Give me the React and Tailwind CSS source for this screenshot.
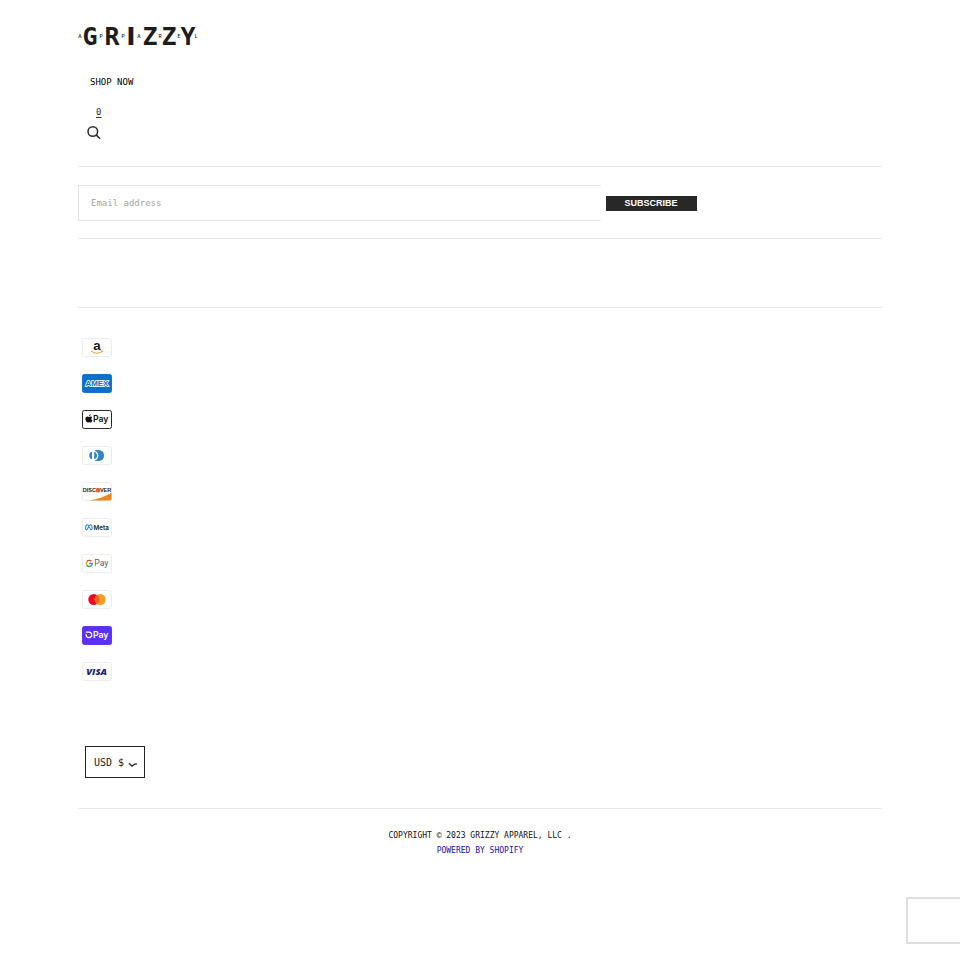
import React, { useState } from 'react';

const MONO = "font-['DejaVu_Sans_Mono',monospace]";

// Big letters of the wordmark, with the small "APPAREL" letters set between them.
// The I comes from a proportional face, the monospace one has slab serifs.
const BIG_LETTERS = [
  { char: 'G', x: 12, font: 'DejaVu Sans Mono, monospace' },
  { char: 'R', x: 34, font: 'DejaVu Sans Mono, monospace' },
  { char: 'I', x: 53, font: 'DejaVu Sans, sans-serif' },
  { char: 'Z', x: 72, font: 'DejaVu Sans Mono, monospace' },
  { char: 'Z', x: 91, font: 'DejaVu Sans Mono, monospace' },
  { char: 'Y', x: 110, font: 'DejaVu Sans Mono, monospace' },
];

const SMALL_LETTERS = [
  { char: 'A', x: 2 },
  { char: 'P', x: 23 },
  { char: 'P', x: 45 },
  { char: 'A', x: 61 },
  { char: 'R', x: 82 },
  { char: 'E', x: 101 },
  { char: 'L', x: 118 },
];

const Logo = () => (
  <svg viewBox="0 0 120 32" className="block h-8 w-[120px] overflow-visible" role="img" aria-label="Grizzy Apparel" fill="#1d1d1d" textAnchor="middle">
    {BIG_LETTERS.map((l) => (
      <text key={l.x} x={l.x} y="25" fontFamily={l.font} fontWeight="700" fontSize="25">{l.char}</text>
    ))}
    {SMALL_LETTERS.map((l) => (
      <text key={l.x} x={l.x} y="18" fontFamily="Roboto, sans-serif" fontWeight="500" fontSize="5">{l.char}</text>
    ))}
  </svg>
);

const Card = ({ title, fill = '#fff', stroke = '#ececec', children }) => (
  <svg viewBox="0 0 38 24" className="block h-[19px] w-[30px] overflow-visible" role="img" aria-label={title}>
    <rect x="0.6" y="0.6" width="36.8" height="22.8" rx="2.4" fill={fill} stroke={stroke} strokeWidth="1.2" />
    {children}
  </svg>
);

const PAYMENTS = [
  {
    name: 'Amazon',
    icon: (
      <Card title="Amazon">
        <text x="19" y="15" textAnchor="middle" fontFamily="Liberation Sans, sans-serif" fontWeight="700" fontSize="17" fill="#1a1a1a">a</text>
        <path d="M12 16.600c4 3 9.500 3 13.200.5" fill="none" stroke="#f0a62f" strokeWidth="1.400" strokeLinecap="round" />
        <path d="M23.800 16l2.300-.1-.6 2.200" fill="none" stroke="#f0a62f" strokeWidth="1" />
      </Card>
    ),
  },
  {
    name: 'American Express',
    icon: (
      <Card title="American Express" fill="#0b70ca" stroke="#0b70ca">
        <text x="19" y="15.700" textAnchor="middle" fontFamily="Liberation Sans, sans-serif" fontWeight="700" fontSize="10" fill="#0b70ca" stroke="#fff" strokeWidth="2" paintOrder="stroke">AMEX</text>
      </Card>
    ),
  },
  {
    name: 'Apple Pay',
    icon: (
      <Card title="Apple Pay" stroke="#1d1d1d">
        <path d="M9 8.700c.8 0 1.300-.5 2.100-.5.7 0 1.400.4 1.800 1-1.700 1-1.400 3.300.3 4-.5 1.300-1.300 2.600-2.300 2.600-.7 0-1-.4-1.800-.4s-1.200.4-1.800.4c-1.600 0-2.900-2.500-2.900-4.500 0-1.900 1.200-3 2.600-3 .8 0 1.400.4 2 .4zM8.900 8c-.1-1.300.9-2.400 2.100-2.500.2 1.300-.9 2.400-2.100 2.500z" fill="#111" />
        <text x="13.800" y="15.800" fontFamily="Inter, sans-serif" fontWeight="600" fontSize="11" fill="#111">Pay</text>
      </Card>
    ),
  },
  {
    name: 'Diners Club',
    icon: (
      <Card title="Diners Club">
        <path d="M16.500 5H21a7 7 0 0 1 0 14h-4.500z" fill="#3086c8" />
        <circle cx="14" cy="12" r="6.600" fill="#fff" />
        <path d="M12.700 7.200a5 5 0 0 0 0 9.600zM15.400 7.200a5 5 0 0 1 0 9.600z" fill="#3086c8" />
      </Card>
    ),
  },
  {
    name: 'Discover',
    icon: (
      <Card title="Discover">
        <path d="M37.400 13.500V21c0 1.400-1 2.400-2.400 2.400H9C20 21.500 30 18 37.400 13.500z" fill="#ef8423" />
        <text x="1" y="12.800" fontFamily="Liberation Sans, sans-serif" fontWeight="700" fontSize="7" fill="#222">DISC</text>
        <circle cx="20.300" cy="10.300" r="2.900" fill="#e5632a" />
        <text x="22.700" y="12.800" fontFamily="Liberation Sans, sans-serif" fontWeight="700" fontSize="7" fill="#222">VER</text>
      </Card>
    ),
  },
  {
    name: 'Meta Pay',
    icon: (
      <Card title="Meta Pay">
        <path d="M4.500 13.500c0-2.700 1.100-5 2.500-5 2 0 2.900 6.400 4.700 6.400.9 0 1.200-.8 1.200-1.800 0-2.500-1-4.600-2.400-4.600-2 0-2.900 6.400-4.800 6.400-.8 0-1.200-.6-1.200-1.400z" fill="none" stroke="#1683db" strokeWidth="1.300" />
        <text x="14.600" y="14.800" fontFamily="Inter, sans-serif" fontWeight="600" fontSize="8" fill="#222">Meta</text>
      </Card>
    ),
  },
  {
    name: 'Google Pay',
    icon: (
      <Card title="Google Pay">
        <g fill="none" strokeWidth="1.800">
          <path d="M12 9.200A3.800 3.800 0 0 0 5.900 10" stroke="#e6453a" />
          <path d="M5.900 10a3.900 3.900 0 0 0 0 4" stroke="#f4b81c" />
          <path d="M5.900 14a3.800 3.800 0 0 0 5.800.900" stroke="#35a352" />
          <path d="M11.700 14.900c.8-.7 1.200-1.600 1.200-2.800H9.200" stroke="#4482e8" />
        </g>
        <text x="15.500" y="15.700" fontFamily="Roboto, sans-serif" fontSize="11" fill="#5a5e62">Pay</text>
      </Card>
    ),
  },
  {
    name: 'Mastercard',
    icon: (
      <Card title="Mastercard">
        <circle cx="15" cy="12" r="7" fill="#e80b20" />
        <circle cx="23" cy="12" r="7" fill="#f49b20" />
        <path d="M19 6.250a7 7 0 0 1 0 11.500 7 7 0 0 1 0-11.500z" fill="#f8601f" />
      </Card>
    ),
  },
  {
    name: 'Shop Pay',
    icon: (
      <Card title="Shop Pay" fill="#5a31f4" stroke="#5a31f4">
        <path d="M4.800 7.600h4a3.600 3.600 0 1 1-3.500 2.700" fill="none" stroke="#fff" strokeWidth="1.600" />
        <text x="13.800" y="15.200" fontFamily="Inter, sans-serif" fontWeight="600" fontSize="11" fill="#fff">Pay</text>
      </Card>
    ),
  },
  {
    name: 'Visa',
    icon: (
      <Card title="Visa">
        <text x="18.500" y="16" textAnchor="middle" fontFamily="Open Sans, sans-serif" fontWeight="800" fontStyle="italic" fontSize="12" fill="#1a2378">VISA</text>
      </Card>
    ),
  },
];

function Header() {
  return (
    <header className="flex flex-col items-start border-b border-[#e8e8e8] pb-[26px] pt-5">
      <a href="#home" className="block">
        <Logo />
      </a>
      <nav className="mt-6 pl-3">
        <a href="#shop" className="block text-[9px] leading-3 text-black">SHOP NOW</a>
      </nav>
      <a href="#cart" aria-label="Cart" className="ml-[18px] mt-[18px] block text-[9px] leading-3 text-[#333] underline underline-offset-2">0</a>
      <button type="button" aria-label="Search" className="ml-2 mt-[7px] block">
        <svg viewBox="0 0 15 15" className="block size-[15px]" fill="none" stroke="#2b2b2b" strokeWidth="1.500">
          <circle cx="6.800" cy="6.500" r="4.800" />
          <path d="M10.200 9.900l4 3.800" />
        </svg>
      </button>
    </header>
  );
}

function Newsletter() {
  const [email, setEmail] = useState('');

  return (
    <form className="flex items-center border-b border-[#e8e8e8] pb-[17px] pt-[18px]" onSubmit={(e) => e.preventDefault()}>
      <input
        type="email"
        aria-label="Email address"
        placeholder="Email address"
        value={email}
        onChange={(e) => setEmail(e.target.value)}
        className="h-9 w-[65%] border border-r-0 border-[#e4e4e4] px-3 text-[9px] text-[#333] outline-none placeholder:text-[#a3a3a3]"
      />
      <button
        type="submit"
        className="ml-[5px] h-[15px] bg-[#282828] px-[19px] font-['Liberation_Sans',sans-serif] text-[9px] font-bold leading-none text-white"
      >
        SUBSCRIBE
      </button>
    </form>
  );
}

function CurrencyPicker() {
  return (
    <div className="relative ml-[7px] w-[60px]">
      <select
        aria-label="Currency"
        className="block h-8 w-full appearance-none border border-[#222] bg-white pl-2 text-[10px] text-[#222]"
      >
        <option>USD $</option>
      </select>
      <svg viewBox="0 0 10 6" className="pointer-events-none absolute right-[7px] top-4 h-[6px] w-[10px]" fill="none" stroke="#222" strokeWidth="1.300">
        <path d="M1 1.200l3 3 2.500-2 2.500-.3" />
      </svg>
    </div>
  );
}

export default function App() {
  return (
    <div className={`min-h-screen bg-white px-[78px] ${MONO}`}>
      <Header />
      <Newsletter />
      <div className="h-[69px] border-b border-[#e8e8e8]" />

      <footer>
        <div className="border-b border-[#e8e8e8] py-[30px]">
          <ul className="flex flex-col gap-[17px] pl-1">
            {PAYMENTS.map((p) => (
              <li key={p.name}>{p.icon}</li>
            ))}
          </ul>
          <div className="mt-[65px]">
            <CurrencyPicker />
          </div>
        </div>
        <div className="pt-[19px] text-center text-[8px] leading-[15px] text-[#111]">
          <p>COPYRIGHT © 2023 GRIZZY APPAREL, LLC .</p>
          <a href="#shopify" className="text-[#1a0dab]">POWERED BY SHOPIFY</a>
        </div>
      </footer>

      {/* Badge pinned to the window edge */}
      <div className="fixed bottom-[9px] right-0 h-[47px] w-[54px] rounded-l-xs border-2 border-r-0 border-[#dedede] bg-white" />
    </div>
  );
}
